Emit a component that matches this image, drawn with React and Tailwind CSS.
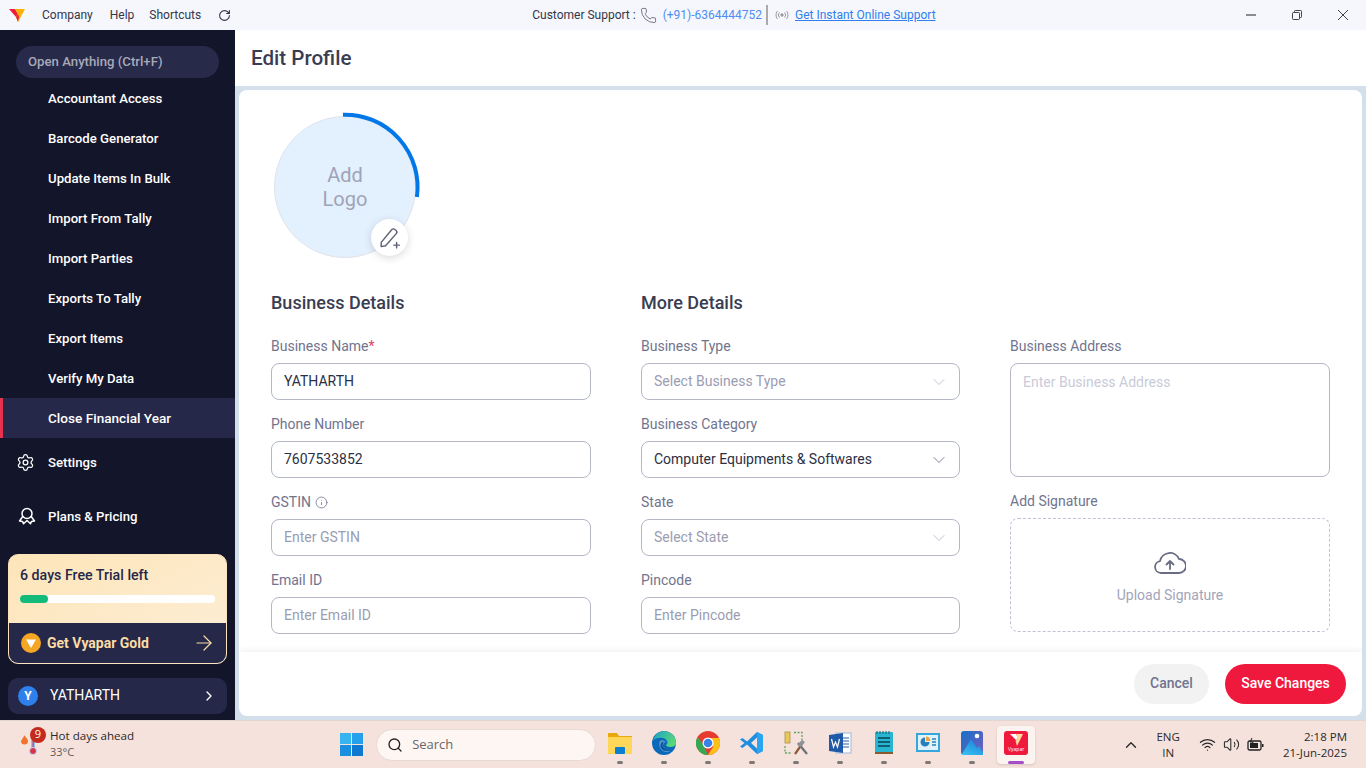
import React from "react";
import { ChevronDown, ChevronRight, ChevronUp, ArrowRight, RotateCw, Phone, Settings, Info, Search, Wifi, Volume2 } from "lucide-react";

const items = ["Accountant Access","Barcode Generator","Update Items In Bulk","Import From Tally","Import Parties","Exports To Tally","Export Items","Verify My Data","Close Financial Year"];

function Logo({ size = 18 }) {
  return (
    <svg width={size} height={size} viewBox="0 0 18 18">
      <path d="M1 3h6l3 5-2 3z" fill="#ef1d3c" />
      <path d="M7 3h10l-7 13-2-5 2-3z" fill="#f9b208" />
      <path d="M8 11l2-3 1 3-1 5z" fill="#ef1d3c" />
    </svg>
  );
}

function Field({ label, placeholder, value, select, info, req }) {
  return (
    <div className="flex h-[78px] flex-col">
      <div className="flex h-[17px] items-center gap-1 text-[14px] leading-[17px] text-[#71748e]">
        <span>{label}{req && <span className="text-[#e4405f]">*</span>}</span>
        {info && <Info size={13} strokeWidth={1.5} />}
      </div>
      <div className="mt-[8px] flex h-[37px] items-center justify-between rounded-lg border border-[#b4b8c6] px-3 text-[14px]">
        <span className={value ? "text-[#2b3045]" : "text-[#9a9db2]"}>{value || placeholder}</span>
        {select && <ChevronDown size={20} strokeWidth={1.1} className={`-mr-[2px] ${value ? "text-[#71748e]" : "text-[#b9bccb]"}`} />}
      </div>
    </div>
  );
}

function Dot({ active }) {
  return active
    ? <div className="mt-[2px] h-[3px] w-[16px] rounded-full bg-[#a44fc9]" />
    : <div className="mt-[2px] h-[3px] w-[6px] rounded-full bg-[#7d7775]" />;
}

function TaskIcon({ children, active }) {
  return (
    <div className={`flex h-[38px] w-[38px] flex-col items-center justify-end rounded ${active ? "bg-[#fbf3ef] shadow-sm" : ""}`}>
      <div className="flex h-[24px] w-[24px] items-center justify-center">{children}</div>
      <div className="mt-[4px] flex h-[5px] items-center"><Dot active={active} /></div>
    </div>
  );
}

export default function App() {
  return (
    <div className="flex h-[768px] w-[1366px] flex-col overflow-hidden bg-white font-['Roboto',sans-serif]">
      {/* title bar */}
      <div className="relative flex h-[30px] shrink-0 items-center bg-[#f5f7fc] text-[12px] text-[#33364a]">
        <div className="ml-[8px] w-[18px]"><Logo /></div>
        <span className="ml-[16px]">Company</span>
        <span className="ml-[17px]">Help</span>
        <span className="ml-[15px]">Shortcuts</span>
        <RotateCw size={13} className="ml-[17px] text-[#33364a]" />
        <div className="ml-[301px] flex items-center">
          <span>Customer Support :</span>
          <Phone size={17} strokeWidth={1.1} className="ml-[4px] text-[#555866]" />
          <span className="ml-[6px] text-[#4f8df0]">(+91)-6364444752</span>
          <div className="ml-[4px] h-[20px] w-[2px] bg-[#aaaaaa]" />
          <svg className="ml-[7px]" width="14" height="12" viewBox="0 0 14 12" fill="none" stroke="#9a9aa0" strokeWidth="1">
            <circle cx="7" cy="6" r="1.2" fill="#9a9aa0" />
            <path d="M4.5 3.5a3.5 3.5 0 0 0 0 5M9.5 3.5a3.5 3.5 0 0 1 0 5M2.5 2a6 6 0 0 0 0 8M11.5 2a6 6 0 0 1 0 8" />
          </svg>
          <span className="ml-[6px] text-[#2f80ed] underline">Get Instant Online Support</span>
        </div>
        <div className="ml-auto mr-[18px] flex items-center gap-[36px]">
          <svg width="10" height="10" viewBox="0 0 10 10" stroke="#444" strokeWidth="1.2"><path d="M0 5h10" /></svg>
          <svg width="10" height="10" viewBox="0 0 10 10" fill="none" stroke="#444" strokeWidth="1">
            <rect x="0.5" y="2.500" width="7" height="7" rx="0.800" />
            <path d="M2.500 2.500V1.300a.8.8 0 0 1 .8-.8h5.400a.8.8 0 0 1 .8.8v5.400a.8.8 0 0 1-.8.8H7.500" />
          </svg>
          <svg width="10" height="10" viewBox="0 0 10 10" stroke="#444" strokeWidth="1"><path d="M0 0l10 10M10 0L0 10" /></svg>
        </div>
      </div>

      <div className="flex h-[690px] shrink-0">
        {/* sidebar */}
        <div className="flex w-[235px] shrink-0 flex-col bg-[#13152a] text-white">
          <div className="mx-[16px] mt-[16px] flex h-[32px] w-[203px] items-center rounded-full bg-[#282a4a] px-3 pb-[1px] text-[13.2px] font-medium text-[#a7a9b9]">Open Anything (Ctrl+F)</div>
          <div className="flex flex-col">
            {items.map((t, i) => (
              <div key={t} className={`flex h-[40px] items-center pl-[48px] text-[13.2px] font-medium ${i === 8 ? "border-l-[3px] border-[#e8304f] bg-[#262849] !pl-[45px] text-[13.600px]" : "pt-[1px]"}`}>{t}</div>
            ))}
          </div>
          <div className="flex h-[48px] items-center pl-[16px] text-[13.2px] font-medium"><Settings size={19} strokeWidth={1.6} /><span className="ml-[13px] mt-[1px]">Settings</span></div>
          <div className="mt-[6px] flex h-[48px] items-center pl-[18px] text-[13.2px] font-medium">
            <svg width="18" height="18" viewBox="0 0 18 18" fill="none" stroke="#fff" strokeWidth="1.500" strokeLinejoin="round" strokeLinecap="round">
              <circle cx="9" cy="6.500" r="5" />
              <path d="M4.800 9.500L1.500 14l3 .4 1 2.300L9 13.500l3.500 3.200 1-2.300 3-.4-3.300-4.500" />
            </svg>
            <span className="ml-[12px] mt-[1px]">Plans &amp; Pricing</span>
          </div>
          <div className="mx-[8px] mt-[14px] h-[110px] w-[219px] overflow-hidden rounded-[10px] border border-[#fde3bd] bg-gradient-to-br from-[#fde5b8] to-[#fdeed8]">
            <div className="h-[68px] px-[11px] pt-[12px]">
              <div className="text-[14.2px] font-medium leading-[17px] text-[#262849]">6 days Free Trial left</div>
              <div className="mt-[11px] h-[8px] w-[195px] rounded-full bg-white"><div className="h-full w-[28px] rounded-full bg-[#12bb7a]" /></div>
            </div>
            <div className="flex h-[40px] items-center bg-[#262849] pl-[12px] pr-[10px]">
              <div className="flex h-[20px] w-[20px] items-center justify-center rounded-full bg-[#f5a623]">
                <svg width="12" height="12" viewBox="0 0 12 12"><path d="M1 2.500h10L6 11z" fill="#fff" /></svg>
              </div>
              <span className="ml-[6px] text-[14px] font-bold text-[#fbdca6]">Get Vyapar Gold</span>
              <ArrowRight size={24} strokeWidth={1.2} className="ml-auto text-[#fbdca6]" />
            </div>
          </div>
          <div className="mx-[8px] mt-[14px] flex h-[36px] w-[219px] items-center rounded-[10px] bg-[#262849] pb-[1px] pl-[10px] pr-[10px]">
            <div className="flex h-[20px] w-[20px] items-center justify-center rounded-full bg-[#2f80ed] text-[12px] font-bold">Y</div>
            <span className="ml-[12px] text-[14px]">YATHARTH</span>
            <ChevronRight size={16} className="ml-auto" />
          </div>
        </div>

        {/* main */}
        <div className="flex min-w-0 flex-1 flex-col bg-[#d3dfea]">
          <div className="flex h-[56px] shrink-0 items-center bg-white pl-[16px] text-[20.6px] font-medium text-[#3a3d52]">Edit Profile</div>
          <div className="mb-[4px] ml-[4px] mr-[4px] mt-[4px] flex h-[626px] flex-col overflow-hidden rounded-lg bg-white">
            <div className="flex-1 pl-[32px] pr-[32px]">
              <div className="relative ml-[3px] mt-[26px] flex h-[142px] w-[142px] items-center justify-center rounded-full border border-[#dfe3ea] bg-[#e3f0fd] text-center text-[20px] leading-[24px] text-[#a0a3b8]">
                <span>Add<br />Logo</span>
                <svg className="absolute left-[-7px] top-[-7px]" width="154" height="154" viewBox="0 0 154 154" fill="none">
                  <path d="M75 4.700A72.500 72.500 0 0 1 148.900 87" stroke="#0277e8" strokeWidth="4" />
                </svg>
                <div className="absolute left-[96px] top-[102px] flex h-[37px] w-[37px] items-center justify-center rounded-full bg-white shadow-[0_2px_8px_rgba(0,0,0,0.15)]">
                  <svg width="22" height="22" viewBox="0 0 20 20" fill="none" stroke="#5f6178" strokeWidth="1.300" strokeLinejoin="round" strokeLinecap="round">
                    <path d="M2 14L11.500 2.500a2 2 0 0 1 3-.2l1 .9a2 2 0 0 1 .2 2.800L6 17l-4 .8z" />
                    <path d="M16 14v5M13.500 16.500h5" />
                  </svg>
                </div>
              </div>
              <div className="mt-[34px] grid grid-cols-[320px_319px_320px] gap-x-[50px]">
                <div>
                  <div className="mb-[24px] h-[22px] text-[18px] font-medium leading-[22px] text-[#3a3d52]">Business Details</div>
                  <Field label="Business Name" req value="YATHARTH" />
                  <Field label="Phone Number" value="7607533852" />
                  <Field label="GSTIN" info placeholder="Enter GSTIN" />
                  <Field label="Email ID" placeholder="Enter Email ID" />
                </div>
                <div>
                  <div className="mb-[24px] h-[22px] text-[18px] font-medium leading-[22px] text-[#3a3d52]">More Details</div>
                  <Field label="Business Type" select placeholder="Select Business Type" />
                  <Field label="Business Category" select value="Computer Equipments & Softwares" />
                  <Field label="State" select placeholder="Select State" />
                  <Field label="Pincode" placeholder="Enter Pincode" />
                </div>
                <div className="pt-[46px]">
                  <div className="h-[17px] text-[14px] leading-[17px] text-[#71748e]">Business Address</div>
                  <div className="mt-[8px] h-[114px] rounded-lg border border-[#b4b8c6] px-3 pt-[8px] text-[14px] text-[#c9cbd8]">Enter Business Address</div>
                  <div className="mt-[16px] h-[17px] text-[14px] leading-[17px] text-[#71748e]">Add Signature</div>
                  <div className="mt-[8px] flex h-[114px] flex-col items-center justify-center rounded-lg border border-dashed border-[#c4bfd6] pt-[4px]">
                    <svg width="32" height="24" viewBox="0 0 32 24" fill="none" stroke="#6a6c84" strokeWidth="1.800" strokeLinecap="round" strokeLinejoin="round">
                      <path d="M8 23H7a6 6 0 0 1-1-11.900A10 10 0 0 1 25 9a7 7 0 0 1 0 14z" />
                      <path d="M16 19v-8M12.500 14.500L16 11l3.500 3.500" />
                    </svg>
                    <span className="mt-[13px] text-[14px] leading-[17px] text-[#a2a5b9]">Upload Signature</span>
                  </div>
                </div>
              </div>
            </div>
            <div className="flex h-[64px] shrink-0 items-center justify-end gap-[16px] pr-[16px] shadow-[0_-2px_6px_rgba(0,0,0,0.06)]">
              <div className="flex h-[40px] w-[75px] items-center justify-center rounded-full bg-[#f2f2f3] pb-[2px] text-[14px] font-medium text-[#71748e]">Cancel</div>
              <div className="flex h-[40px] w-[121px] items-center justify-center rounded-full bg-[#ef193d] pb-[2px] text-[14px] font-medium text-white">Save Changes</div>
            </div>
          </div>
        </div>
      </div>

      {/* taskbar */}
      <div className="relative flex h-[48px] shrink-0 items-center border-t border-[#e3d5cf] bg-[#f6e2dc] font-['Open_Sans',sans-serif] text-[#2a2a2a]">
        <div className="relative ml-[18px] h-[36px] w-[32px]">
          <svg className="absolute left-[2px] top-[8px]" width="20" height="20" viewBox="0 0 20 20">
            <path d="M4 0c1 2 4 3 4 6.500a3.600 3.600 0 0 1-7 .5c0-2 1-2 1.500-3.500C3 3 4 2 4 0z" fill="#f0722c" />
            <rect x="11" y="3" width="4" height="13" fill="#8fc4f2" />
            <rect x="12.500" y="6" width="1.200" height="9" fill="#d9304c" />
            <circle cx="13" cy="16" r="3.500" fill="#d9304c" stroke="#b9dcf6" />
          </svg>
          <div className="absolute left-[12px] top-0 flex h-[16px] w-[16px] items-center justify-center rounded-full bg-[#c42b1c] text-[11px] text-white">9</div>
        </div>
        <div className="-mt-[2px] leading-[16px]">
          <div className="text-[11.600px]">Hot days ahead</div>
          <div className="text-[11px] text-[#5f5b59]">33°C</div>
        </div>
        <div className="ml-[206px] grid h-[23px] w-[23px] grid-cols-2 gap-[1px]">
          <div className="bg-[#36b4f0]" /><div className="bg-[#26a0ea]" /><div className="bg-[#1a8fe0]" /><div className="bg-[#0f78d0]" />
        </div>
        <div className="ml-[13px] flex h-[32px] w-[220px] items-center rounded-full border border-[#e8dad4] bg-[#fdf6f3] pl-[10px] text-[13px] text-[#6a6664]">
          <Search size={16} strokeWidth={2} className="text-[#222]" />
          <span className="ml-[9px]">Search</span>
        </div>
        <div className="ml-[5px] flex gap-[6px]">
          <TaskIcon><svg width="24" height="22" viewBox="0 0 24 22"><path d="M0 2a1 1 0 0 1 1-1h8l2 3h13v17H0z" fill="#e8a80c" /><rect y="5" width="24" height="17" fill="#fdd65a" /><rect x="7" y="15" width="10" height="7" rx="1" fill="#0d7fd0" /></svg></TaskIcon>
          <TaskIcon>
            <svg width="24" height="24" viewBox="0 0 24 24">
              <defs><linearGradient id="edgeTop" x1="0" y1="0" x2="1" y2="0.500"><stop offset="0" stopColor="#1aa0c8" /><stop offset="1" stopColor="#58d87a" /></linearGradient></defs>
              <circle cx="12" cy="12" r="12" fill="#0c68b8" />
              <path d="M1 10C2 4 7 0 12 0c6 0 12 5 12 12 0 3-3 4-6 4-2 0-4-1-4-2 1-1 2-2 1-4-1-3-5-4-8-3-3 0-5 1-6 3z" fill="url(#edgeTop)" />
              <path d="M8 10c-2 4 0 10 6 11 2 .5 4-.5 5-1-4 1-8-1-8-5 0-2 1-4 3-4-2-2-5-2-6-1z" fill="#f0f8ff" opacity="0.350" />
              <path d="M10.500 14c0 3 2 5 5 5.500-3 1-7-1-7-5 0-2 1-3.500 3-4z" fill="#0c4f94" />
            </svg>
          </TaskIcon>
          <TaskIcon><svg width="24" height="24" viewBox="0 0 24 24"><circle cx="12" cy="12" r="12" fill="#e53b30" /><path d="M12 24A12 12 0 0 1 1.600 6L7 13l5 11z" fill="#34a853" /><path d="M12 24A12 12 0 0 0 23 7H12l5 9z" fill="#fbc116" /><circle cx="12" cy="12" r="5.500" fill="#fff" /><circle cx="12" cy="12" r="4.300" fill="#3b82e8" /></svg></TaskIcon>
          <TaskIcon><svg width="24" height="24" viewBox="0 0 24 24"><path d="M17 1l6 3v16l-6 3-10-9.500L2.500 17 0 15.500 4.500 12 0 8.500 2.500 7 7 10.500z" fill="#1f8ee0" /><path d="M17 1l6 3v16l-6 3z" fill="#2aa5f0" /><path d="M17 6.500L11 12l6 5.500z" fill="#f6e2dc" /></svg></TaskIcon>
          <TaskIcon>
            <svg width="24" height="24" viewBox="0 0 24 24" fill="none">
              <rect x="1" y="1" width="5" height="11" fill="#e9c85a" stroke="#a8914a" strokeWidth="0.800" />
              <path d="M10 1.500h8v8M1 15v7h7" stroke="#5ea35c" strokeWidth="1.300" strokeDasharray="2 1.500" />
              <path d="M11 23l7-10" stroke="#8d5a35" strokeWidth="2.200" />
              <path d="M23 23l-9-11" stroke="#6b7076" strokeWidth="2.200" />
              <path d="M13 14l5-5 3 2-4 5z" fill="#8e9297" />
            </svg>
          </TaskIcon>
          <TaskIcon><svg width="24" height="24" viewBox="0 0 24 24"><rect x="8" y="2" width="15" height="20" fill="#fff" stroke="#9fb7d8" /><path d="M14 7h7M14 10h7M14 13h7M14 16h7" stroke="#2b5fa8" /><path d="M1 4l14-2v20L1 20z" fill="#1f5aa8" /><path d="M3.500 8l2 8 2-5 2 5 2-8" stroke="#fff" strokeWidth="1.200" fill="none" /></svg></TaskIcon>
          <TaskIcon><svg width="20" height="24" viewBox="0 0 20 24"><rect x="1" y="1" width="18" height="21" rx="1" fill="#28b5cf" /><rect x="1" y="21" width="18" height="2" fill="#8a5a2c" /><path d="M4 7h12M4 11h12M4 15h12" stroke="#0f5e74" strokeWidth="1.800" /><path d="M3 0v3M6 0v3M9 0v3M12 0v3M15 0v3" stroke="#0f5e74" /></svg></TaskIcon>
          <TaskIcon><svg width="24" height="24" viewBox="0 0 24 24"><rect x="0" y="2" width="24" height="19" fill="#35a7dc" /><rect x="2" y="4" width="20" height="15" fill="#dff2fb" /><path d="M9 11V6.500A4.500 4.500 0 1 0 13.500 11z" fill="#2b7fb8" /><path d="M10 10V5.500A4.500 4.500 0 0 1 14.500 10z" fill="#f0a23b" /><path d="M16 8h4M16 11h4M16 14h4" stroke="#2b7fb8" strokeWidth="1.300" /></svg></TaskIcon>
          <TaskIcon>
            <svg width="22" height="24" viewBox="0 0 22 24">
              <defs>
                <linearGradient id="photoBg" x1="0" y1="0" x2="1" y2="1"><stop offset="0" stopColor="#1470c8" /><stop offset="1" stopColor="#7a5cc0" /></linearGradient>
                <linearGradient id="photoHill" x1="0" y1="1" x2="0.600" y2="0"><stop offset="0" stopColor="#38c4f0" /><stop offset="1" stopColor="#1c86dc" /></linearGradient>
              </defs>
              <rect width="22" height="24" rx="3" fill="url(#photoBg)" />
              <path d="M1 23L10 8l6 9 2-2 4 6v3H1z" fill="url(#photoHill)" />
              <circle cx="16" cy="5" r="2.300" fill="#fff" />
            </svg>
          </TaskIcon>
          <TaskIcon active><div className="flex h-[24px] w-[24px] flex-col items-center justify-center rounded-[3px] bg-[#ef193d]"><svg width="15" height="12" viewBox="0 0 15 12"><path d="M1 0h6l2 4-2 2z" fill="#fff" /><path d="M7 0h7L8 12 6.500 7l2-3z" fill="#fdd9a0" /></svg><span className="text-[5px] leading-[6px] text-white">Vyapar</span></div></TaskIcon>
        </div>
        <ChevronUp size={18} strokeWidth={1.8} className="ml-[87px]" />
        <div className="ml-[14px] w-[28px] text-center text-[11.5px] leading-[16px]">ENG<br />IN</div>
        <Wifi size={17} strokeWidth={1.7} className="ml-[17px]" />
        <Volume2 size={17} strokeWidth={1.5} className="ml-[7px]" />
        <svg className="ml-[7px]" width="17" height="14" viewBox="0 0 17 14" fill="none"><rect x="1" y="3" width="13" height="9" rx="1.500" stroke="#222" strokeWidth="1.300" /><rect x="3" y="5" width="8" height="5" fill="#222" /><rect x="15" y="6" width="1.500" height="3" fill="#222" /><path d="M5 0L3 4h3L5 7" stroke="#222" /></svg>
        <div className="ml-auto mr-[19px] text-right text-[11.5px] leading-[16px]">2:18 PM<br />21-Jun-2025</div>
      </div>
    </div>
  );
}
